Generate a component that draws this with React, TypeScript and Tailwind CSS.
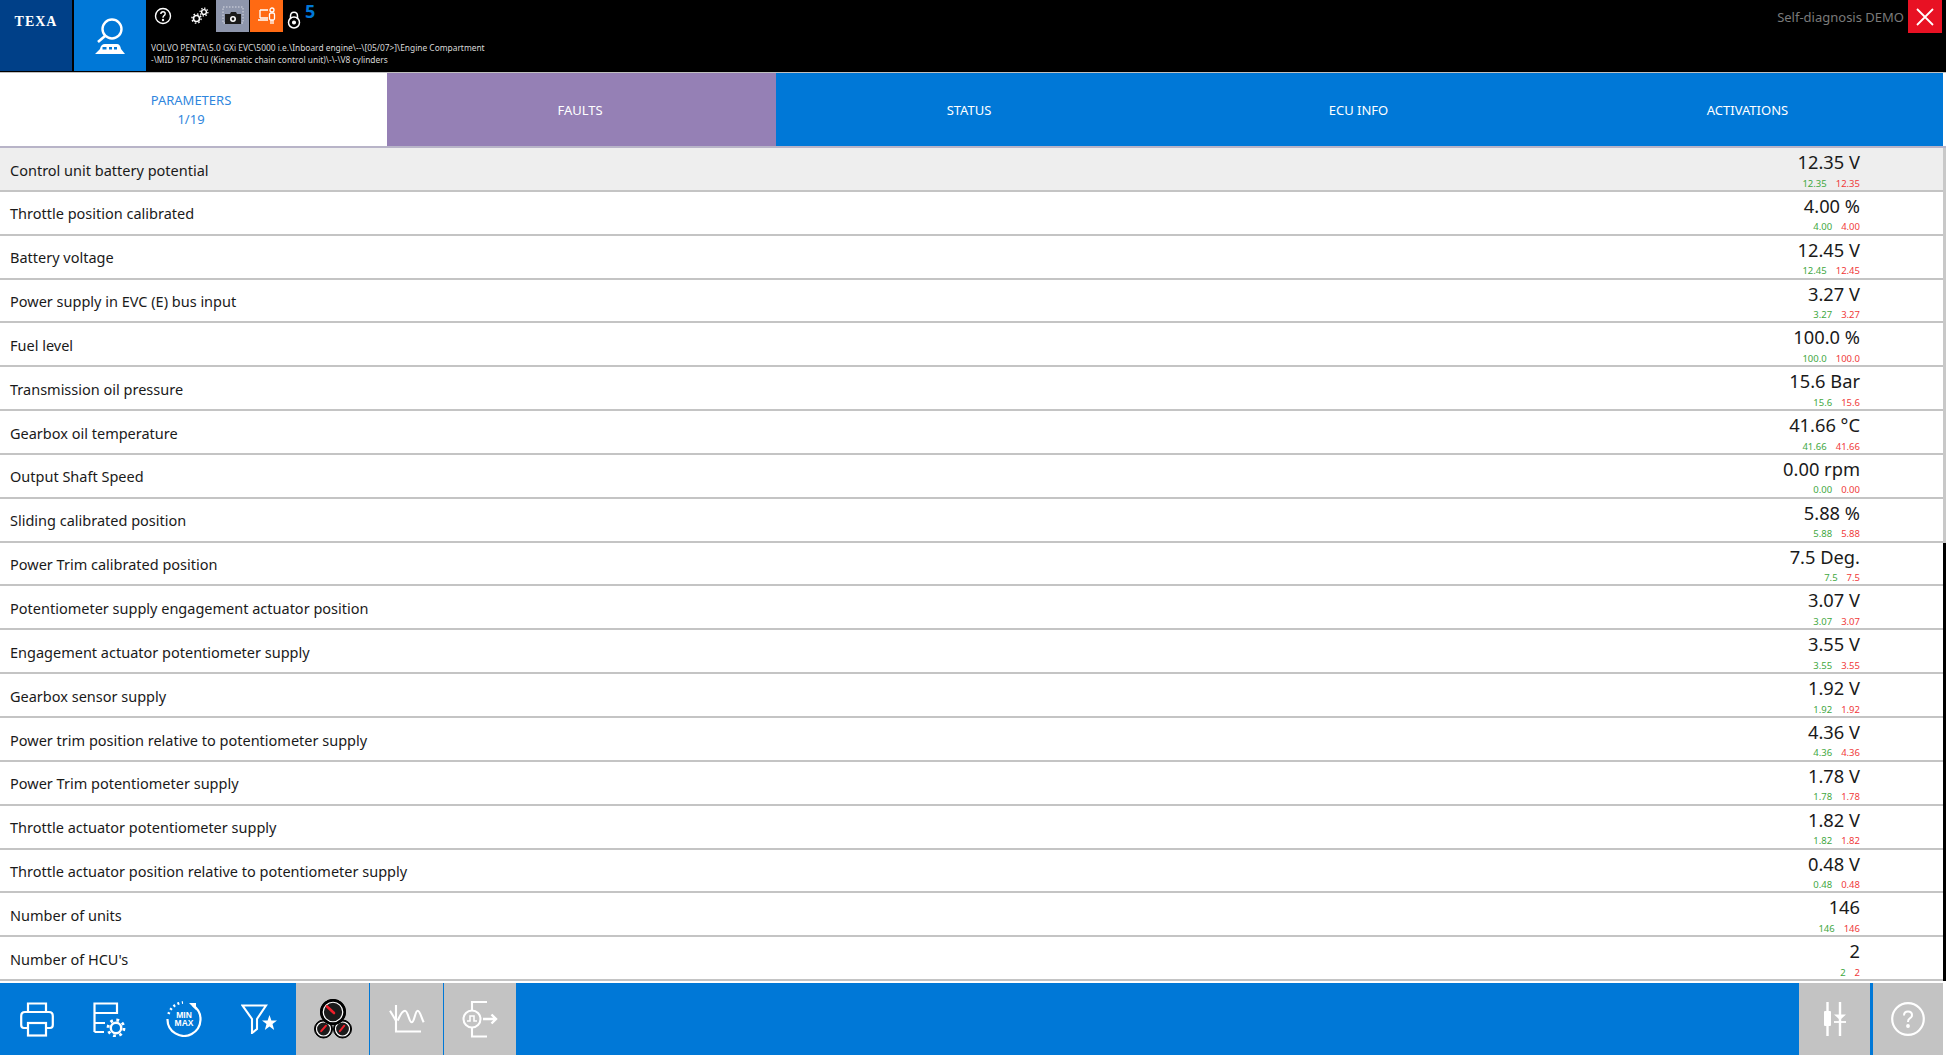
const FONT = 'font-["Noto_Sans","Open_Sans",sans-serif]';

const rows = [
  ['Control unit battery potential', '12.35 V', '12.35'],
  ['Throttle position calibrated', '4.00 %', '4.00'],
  ['Battery voltage', '12.45 V', '12.45'],
  ['Power supply in EVC (E) bus input', '3.27 V', '3.27'],
  ['Fuel level', '100.0 %', '100.0'],
  ['Transmission oil pressure', '15.6 Bar', '15.6'],
  ['Gearbox oil temperature', '41.66 °C', '41.66'],
  ['Output Shaft Speed', '0.00 rpm', '0.00'],
  ['Sliding calibrated position', '5.88 %', '5.88'],
  ['Power Trim calibrated position', '7.5 Deg.', '7.5'],
  ['Potentiometer supply engagement actuator position', '3.07 V', '3.07'],
  ['Engagement actuator potentiometer supply', '3.55 V', '3.55'],
  ['Gearbox sensor supply', '1.92 V', '1.92'],
  ['Power trim position relative to potentiometer supply', '4.36 V', '4.36'],
  ['Power Trim potentiometer supply', '1.78 V', '1.78'],
  ['Throttle actuator potentiometer supply', '1.82 V', '1.82'],
  ['Throttle actuator position relative to potentiometer supply', '0.48 V', '0.48'],
  ['Number of units', '146', '146'],
  ["Number of HCU's", '2', '2'],
];

function SearchIcon() {
  return (
    <svg width="34" height="38" viewBox="0 0 34 38" fill="none" stroke="white">
      <circle cx="19" cy="12" r="9.5" strokeWidth="2.4" />
      <path d="M12 19 L5 25" strokeWidth="2.6" />
      <path d="M2 37 L7 32 Q8 27 12 27 H24 Q27 27 28 32 L32 37 Z" fill="white" stroke="none" />
      <rect x="9.5" y="30" width="4" height="2.5" fill="#0078d7" stroke="none" />
      <rect x="16" y="30" width="3" height="2.5" fill="#0078d7" stroke="none" />
      <rect x="21" y="30" width="3" height="2.5" fill="#0078d7" stroke="none" />
    </svg>
  );
}

function HelpSmall() {
  return (
    <svg width="18" height="18" viewBox="0 0 18 18" fill="none" stroke="white" strokeWidth="1.4">
      <circle cx="9" cy="9" r="7.5" />
      <path d="M6.8 7 Q7 4.8 9 4.8 Q11.2 4.8 11.2 6.8 Q11.2 8 9.8 8.8 Q9 9.3 9 10.8" />
      <circle cx="9" cy="13" r="0.5" fill="white" />
    </svg>
  );
}

function Gears() {
  return (
    <svg width="18" height="18" viewBox="0 0 18 18" fill="none" stroke="white">
      <circle cx="5.5" cy="11.5" r="3" strokeWidth="1.6" />
      <circle cx="5.5" cy="11.5" r="4.6" strokeWidth="1.4" strokeDasharray="1.6 2" />
      <circle cx="13" cy="5" r="2.4" strokeWidth="1.4" />
      <circle cx="13" cy="5" r="3.9" strokeWidth="1.2" strokeDasharray="1.4 1.6" />
    </svg>
  );
}

function CameraIcon() {
  return (
    <svg width="22" height="20" viewBox="0 0 22 20" fill="none">
      <rect x="1" y="1" width="20" height="16" stroke="#d8dbe4" strokeDasharray="1.5 1.5" />
      <path d="M3 8 H8 L9 6 H14 L15 8 H19 V18 H3 Z" fill="#1a1a1a" />
      <circle cx="11" cy="13" r="3" fill="white" />
      <circle cx="11" cy="13" r="1.4" fill="#1a1a1a" />
    </svg>
  );
}

function PersonLaptop() {
  return (
    <svg width="20" height="18" viewBox="0 0 20 18" fill="none" stroke="white" strokeWidth="1.3">
      <path d="M3 3 H11 M3 3 V11 M1 13 H11 M3 11 H11" />
      <circle cx="15" cy="3" r="2" />
      <rect x="12.5" y="6" width="5" height="7" rx="1.5" />
      <path d="M14 13 V17 M16 13 V17" />
    </svg>
  );
}

function Lock() {
  return (
    <svg width="14" height="18" viewBox="0 0 14 18" fill="none" stroke="white" strokeWidth="1.5">
      <path d="M3.5 8 V5 Q3.5 1.2 7 1.2 Q10.5 1.2 10.5 5 V8" />
      <circle cx="7" cy="11.5" r="5.5" />
      <circle cx="7" cy="11.5" r="1.3" fill="white" />
    </svg>
  );
}

function PrintIcon() {
  return (
    <svg width="34" height="35" viewBox="0 0 34 35" fill="none" stroke="white" strokeWidth="2.2">
      <path d="M8 10 V1.5 H26 V10" />
      <path d="M8 26 H4 Q1.2 26 1.2 23 V14 Q1.2 10 5 10 H29 Q32.8 10 32.8 14 V23 Q32.8 26 30 26 H26" />
      <rect x="8" y="21" width="18" height="12.5" />
    </svg>
  );
}

function ConfigIcon() {
  return (
    <svg width="34" height="35" viewBox="0 0 34 35" fill="none" stroke="white" strokeWidth="2.2">
      <path d="M1.5 30 V1.5 H24 V11 H1.5 M1.5 11 V21 H12 M1.5 30 H11" />
      <circle cx="23" cy="26" r="5.2" strokeWidth="2.4" />
      <circle cx="23" cy="26" r="8" strokeWidth="2.8" strokeDasharray="2.8 3.5" />
    </svg>
  );
}

function MinMaxIcon() {
  return (
    <svg width="36" height="36" viewBox="0 0 36 36" fill="none" stroke="white">
      <path d="M1.5 18 A16.5 16.5 0 1 0 27 4.5" strokeWidth="2.2" />
      <path d="M2.5 13 A16.5 16.5 0 0 1 17 1.5" strokeWidth="2.6" strokeDasharray="2 2.6" />
      <path d="M23 2 H30 V9 Z" fill="white" stroke="none" />
      <text x="18" y="16.5" textAnchor="middle" fill="white" stroke="none" fontSize="8.5" fontWeight="700" fontFamily="Liberation Sans, sans-serif">MIN</text>
      <text x="18" y="24.5" textAnchor="middle" fill="white" stroke="none" fontSize="8.5" fontWeight="700" fontFamily="Liberation Sans, sans-serif">MAX</text>
    </svg>
  );
}

function FilterStar() {
  return (
    <svg width="36" height="30" viewBox="0 0 36 30" fill="none" stroke="white" strokeWidth="2.1">
      <path d="M1.5 1.5 H25 L16 15 V25 L11 29 V15 Z" />
      <path d="M28.5 11 L30.4 16.5 H36 L31.5 20 L33.2 26 L28.5 22.4 L23.8 26 L25.5 20 L21 16.5 H26.6 Z" fill="white" stroke="none" />
    </svg>
  );
}

function Gauge({ cx, cy, r, needle, width }: { cx: number; cy: number; r: number; needle: string; width: number }) {
  return (
    <g>
      <circle cx={cx} cy={cy} r={r} fill="black" stroke="black" strokeWidth="1" />
      <circle cx={cx} cy={cy} r={r * 0.78} fill="#1c1c1c" stroke="white" strokeWidth="1.2" />
      <path d={needle} stroke="#f01f2a" strokeWidth={width} strokeLinecap="round" />
    </g>
  );
}

function GaugesIcon() {
  return (
    <svg width="38" height="40" viewBox="0 0 38 40">
      <Gauge cx={9.5} cy={30} r={9} needle="M7.2 32.2 L12 26.7" width={2} />
      <Gauge cx={28.5} cy={30} r={9} needle="M25.8 32.2 L30.3 26.7" width={2} />
      <circle cx="19" cy="13" r="13" fill="black" />
      <Gauge cx={19} cy={13} r={12.5} needle="M13 7.5 L20 14" width={2.6} />
    </svg>
  );
}

function WaveIcon() {
  return (
    <svg width="36" height="28" viewBox="0 0 36 28" fill="none" stroke="white" strokeWidth="2.1">
      <path d="M7 0 V26.5 H32" />
      <path d="M1 5.7 L7 15.7" />
      <path d="M8.7 15.7 C11 10 13 5.7 16 5.7 C19 5.7 20 17.3 22.7 17.3 C25.5 17.3 26 5.7 28.7 5.7 C31 5.7 32.5 13 34.7 17.3" />
    </svg>
  );
}

function SignalOutIcon() {
  return (
    <svg width="36" height="38" viewBox="0 0 36 38" fill="none" stroke="white" strokeWidth="2.1">
      <path d="M25 2 H10 V10 M10 28 V36.5 H25" />
      <circle cx="10" cy="19" r="8.5" />
      <path d="M5 21 H8 V16 H12 V21 H15" strokeWidth="1.6" />
      <path d="M21 19 H34 M29.5 14.5 L34 19 L29.5 23.5" strokeWidth="2.4" />
    </svg>
  );
}

function TuneIcon() {
  return (
    <svg width="24" height="36" viewBox="0 0 24 36" fill="none" stroke="white" strokeWidth="2.4">
      <path d="M4.5 1 V35 M17 1 V35" />
      <rect x="1" y="10" width="7" height="15" rx="1" fill="white" stroke="none" />
      <path d="M11 13.5 H23 L17 19 Z" fill="white" stroke="none" />
      <path d="M11 21 H23" strokeWidth="1.8" />
    </svg>
  );
}

function HelpBig() {
  return (
    <svg width="34" height="34" viewBox="0 0 34 34" fill="none" stroke="white" strokeWidth="2.2">
      <circle cx="17" cy="17" r="15.8" />
      <path d="M13 13.5 Q13 9.5 17 9.5 Q21 9.5 21 13 Q21 15.2 18.8 16.4 Q17 17.5 17 20" strokeWidth="2" />
      <circle cx="17" cy="24" r="0.8" fill="white" />
    </svg>
  );
}

export default function App() {
  return (
    <div className={`flex h-[1055px] w-[1946px] flex-col overflow-hidden bg-white ${FONT}`}>
      {/* Header */}
      <div className="flex h-[72px] shrink-0 bg-black">
        <div className="flex h-[71px] w-[72px] justify-center bg-[#004088] pt-[12px] font-['Liberation_Serif',serif] text-[14px] leading-[20px] font-bold tracking-[1px] text-white">
          TEXA
        </div>
        <div className="ml-[2px] flex h-[71px] w-[72px] items-center justify-center bg-[#0078d7]">
          <SearchIcon />
        </div>
        <div className="ml-[5px] flex flex-col">
          <div className="flex h-[33px] items-start">
            <div className="mt-[7px] ml-[3px] w-[33px]"><HelpSmall /></div>
            <div className="mt-[7px] mr-[1px] ml-[4px] w-[24px]"><Gears /></div>
            <div className="flex h-[32px] w-[33px] items-center justify-center bg-[#8e96ac]"><CameraIcon /></div>
            <div className="ml-[1px] flex h-[32px] w-[33px] items-center justify-center bg-[#ff6a13]"><PersonLaptop /></div>
            <div className="mt-[11px] ml-[4px]"><Lock /></div>
            <div className="mt-[1px] ml-[4px] text-[18px] leading-[20px] font-bold text-[#0078d7]">5</div>
          </div>
          <div className="mt-[9px] text-[8.4px] leading-[12px] whitespace-nowrap text-[#d8d8d8]">
            <div>VOLVO PENTA\5.0 GXi EVC\5000 i.e.\Inboard engine\--\[05/07&gt;]\Engine Compartment</div>
            <div>-\MID 187 PCU (Kinematic chain control unit)\-\-\V8 cylinders</div>
          </div>
        </div>
        <div className="ml-auto flex items-start">
          <div className="mt-[8px] mr-[4px] text-[13px] text-[#7a7a7a]">Self-diagnosis DEMO</div>
          <div className="mr-[4px] flex h-[33px] w-[34px] items-center justify-center bg-[#e81123]">
            <svg width="18" height="18" viewBox="0 0 18 18" stroke="white" strokeWidth="1.8">
              <path d="M1 1 L17 17 M17 1 L1 17" />
            </svg>
          </div>
        </div>
      </div>

      {/* Tabs */}
      <div className="grid h-[74px] shrink-0 grid-cols-[387px_389px_389px_389px_389px] border-t border-[#c0c0c0] text-center text-[13px] leading-[19px]">
        <div className="flex flex-col items-center justify-center bg-white pr-[5px] text-[#2f86dd]">
          <span>PARAMETERS</span>
          <span>1/19</span>
        </div>
        <div className="flex items-center justify-center bg-[#9580b5] pt-[1px] pr-[3px] text-white">FAULTS</div>
        <div className="flex items-center justify-center bg-[#0078d7] pt-[1px] pr-[3px] text-white">STATUS</div>
        <div className="flex items-center justify-center bg-[#0078d7] pt-[1px] pr-[2px] text-white">ECU INFO</div>
        <div className="flex items-center justify-center bg-[#0078d7] pt-[1px] pr-[2px] text-white">ACTIVATIONS</div>
      </div>

      {/* Parameter rows with the thin scrollbar on the right */}
      <div className="flex min-h-0 flex-1 border-t-2 border-[#b8b4c8]">
        <div className="flex min-h-0 flex-1 flex-col">
          {rows.map(([label, value, limit], i) => (
            <div
              key={label}
              className={`flex min-h-0 flex-1 items-center justify-between border-b-2 border-[#c4c4c4] pr-[83px] pl-[10px] ${i === 0 ? 'bg-[#eeeeee]' : 'bg-white'}`}
            >
              <span className="pt-[3px] text-[14.5px] text-[#1a1a1a]">{label}</span>
              <div className="flex h-full flex-col items-end pt-[2px]">
                <span className="text-[18.3px] leading-[24px] text-[#1a1a1a]">{value}</span>
                <span className="mt-[3.5px] flex gap-[9px] text-[9.5px] leading-[12px]">
                  <span className="text-[#3fa83f]">{limit}</span>
                  <span className="text-[#f03a3a]">{limit}</span>
                </span>
              </div>
            </div>
          ))}
        </div>
        <div className="flex w-[3px] flex-col">
          <div className="h-[395px] bg-[#c8c8c8]" />
          <div className="flex-1 bg-black" />
        </div>
      </div>

      {/* Bottom toolbar */}
      <div className="mt-[2px] flex h-[72px] w-[1943px] shrink-0 bg-[#0078d7]">
        <div className="flex h-full w-[73px] items-center justify-center"><PrintIcon /></div>
        <div className="flex h-full w-[74px] items-center justify-center"><ConfigIcon /></div>
        <div className="flex h-full w-[74px] items-center justify-center"><MinMaxIcon /></div>
        <div className="flex h-full w-[75px] items-center justify-center"><FilterStar /></div>
        <div className="flex h-full w-[73px] items-center justify-center bg-[#c3c3c3]"><GaugesIcon /></div>
        <div className="ml-[1px] flex h-full w-[73px] items-center justify-center bg-[#c3c3c3]"><WaveIcon /></div>
        <div className="ml-[1px] flex h-full w-[72px] items-center justify-center bg-[#c3c3c3]"><SignalOutIcon /></div>
        <div className="ml-auto flex h-full w-[71px] items-center justify-center bg-[#c3c3c3]"><TuneIcon /></div>
        <div className="ml-[3px] flex h-full w-[70px] items-center justify-center bg-[#c3c3c3]"><HelpBig /></div>
      </div>
    </div>
  );
}
